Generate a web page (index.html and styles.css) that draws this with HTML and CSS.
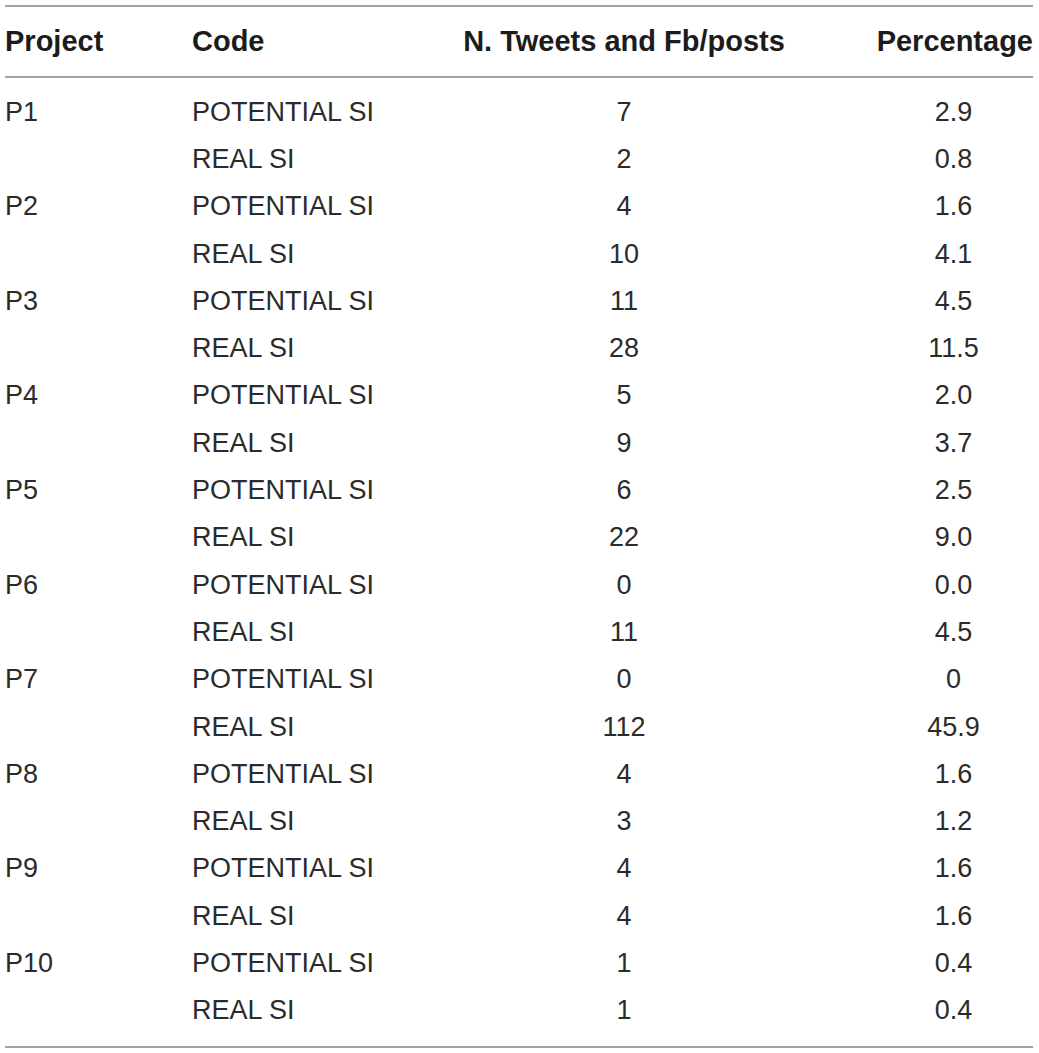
FILE: index.html
```html
<!DOCTYPE html>
<html>
<head>
<meta charset="utf-8">
<link rel="stylesheet" href="styles.css">
</head>
<body>
<div class="table">
  <div class="head row">
    <div class="c1">Project</div>
    <div class="c2">Code</div>
    <div class="c3">N. Tweets and Fb/posts</div>
    <div class="c4 hr">Percentage</div>
  </div>
  <div class="body">
    <div class="row"><div class="c1">P1</div><div class="c2">POTENTIAL SI</div><div class="c3">7</div><div class="c4">2.9</div></div>
    <div class="row"><div class="c1"></div><div class="c2">REAL SI</div><div class="c3">2</div><div class="c4">0.8</div></div>
    <div class="row"><div class="c1">P2</div><div class="c2">POTENTIAL SI</div><div class="c3">4</div><div class="c4">1.6</div></div>
    <div class="row"><div class="c1"></div><div class="c2">REAL SI</div><div class="c3">10</div><div class="c4">4.1</div></div>
    <div class="row"><div class="c1">P3</div><div class="c2">POTENTIAL SI</div><div class="c3">11</div><div class="c4">4.5</div></div>
    <div class="row"><div class="c1"></div><div class="c2">REAL SI</div><div class="c3">28</div><div class="c4">11.5</div></div>
    <div class="row"><div class="c1">P4</div><div class="c2">POTENTIAL SI</div><div class="c3">5</div><div class="c4">2.0</div></div>
    <div class="row"><div class="c1"></div><div class="c2">REAL SI</div><div class="c3">9</div><div class="c4">3.7</div></div>
    <div class="row"><div class="c1">P5</div><div class="c2">POTENTIAL SI</div><div class="c3">6</div><div class="c4">2.5</div></div>
    <div class="row"><div class="c1"></div><div class="c2">REAL SI</div><div class="c3">22</div><div class="c4">9.0</div></div>
    <div class="row"><div class="c1">P6</div><div class="c2">POTENTIAL SI</div><div class="c3">0</div><div class="c4">0.0</div></div>
    <div class="row"><div class="c1"></div><div class="c2">REAL SI</div><div class="c3">11</div><div class="c4">4.5</div></div>
    <div class="row"><div class="c1">P7</div><div class="c2">POTENTIAL SI</div><div class="c3">0</div><div class="c4">0</div></div>
    <div class="row"><div class="c1"></div><div class="c2">REAL SI</div><div class="c3">112</div><div class="c4">45.9</div></div>
    <div class="row"><div class="c1">P8</div><div class="c2">POTENTIAL SI</div><div class="c3">4</div><div class="c4">1.6</div></div>
    <div class="row"><div class="c1"></div><div class="c2">REAL SI</div><div class="c3">3</div><div class="c4">1.2</div></div>
    <div class="row"><div class="c1">P9</div><div class="c2">POTENTIAL SI</div><div class="c3">4</div><div class="c4">1.6</div></div>
    <div class="row"><div class="c1"></div><div class="c2">REAL SI</div><div class="c3">4</div><div class="c4">1.6</div></div>
    <div class="row"><div class="c1">P10</div><div class="c2">POTENTIAL SI</div><div class="c3">1</div><div class="c4">0.4</div></div>
    <div class="row"><div class="c1"></div><div class="c2">REAL SI</div><div class="c3">1</div><div class="c4">0.4</div></div>
  </div>
</div>
</body>
</html>
```
FILE: styles.css
```css
html, body {
  margin: 0;
  padding: 0;
  background: #ffffff;
}
body {
  padding: 5px 6px 0 5px;
  font-family: "Liberation Sans", Arial, sans-serif;
  color: #2b2b2b;
}
.table {
  width: 1028px;
  border-top: 2px solid #a3a3a3;
  border-bottom: 2px solid #a3a3a3;
}
.row {
  display: grid;
  grid-template-columns: 187px 270px 324px 247px;
  align-items: center;
  height: 47.3px;
  font-size: 27px;
  white-space: nowrap;
}
.head {
  height: 69px;
  font-weight: bold;
  font-size: 29px;
  color: #1c1c1c;
  border-bottom: 2px solid #a3a3a3;
}
.body {
  padding: 10.5px 0 11.5px 0;
}
.c3 {
  text-align: center;
}
.c4 {
  text-align: center;
  padding-left: 88px;
}
.c4.hr {
  text-align: right;
  padding-left: 0;
}
```
